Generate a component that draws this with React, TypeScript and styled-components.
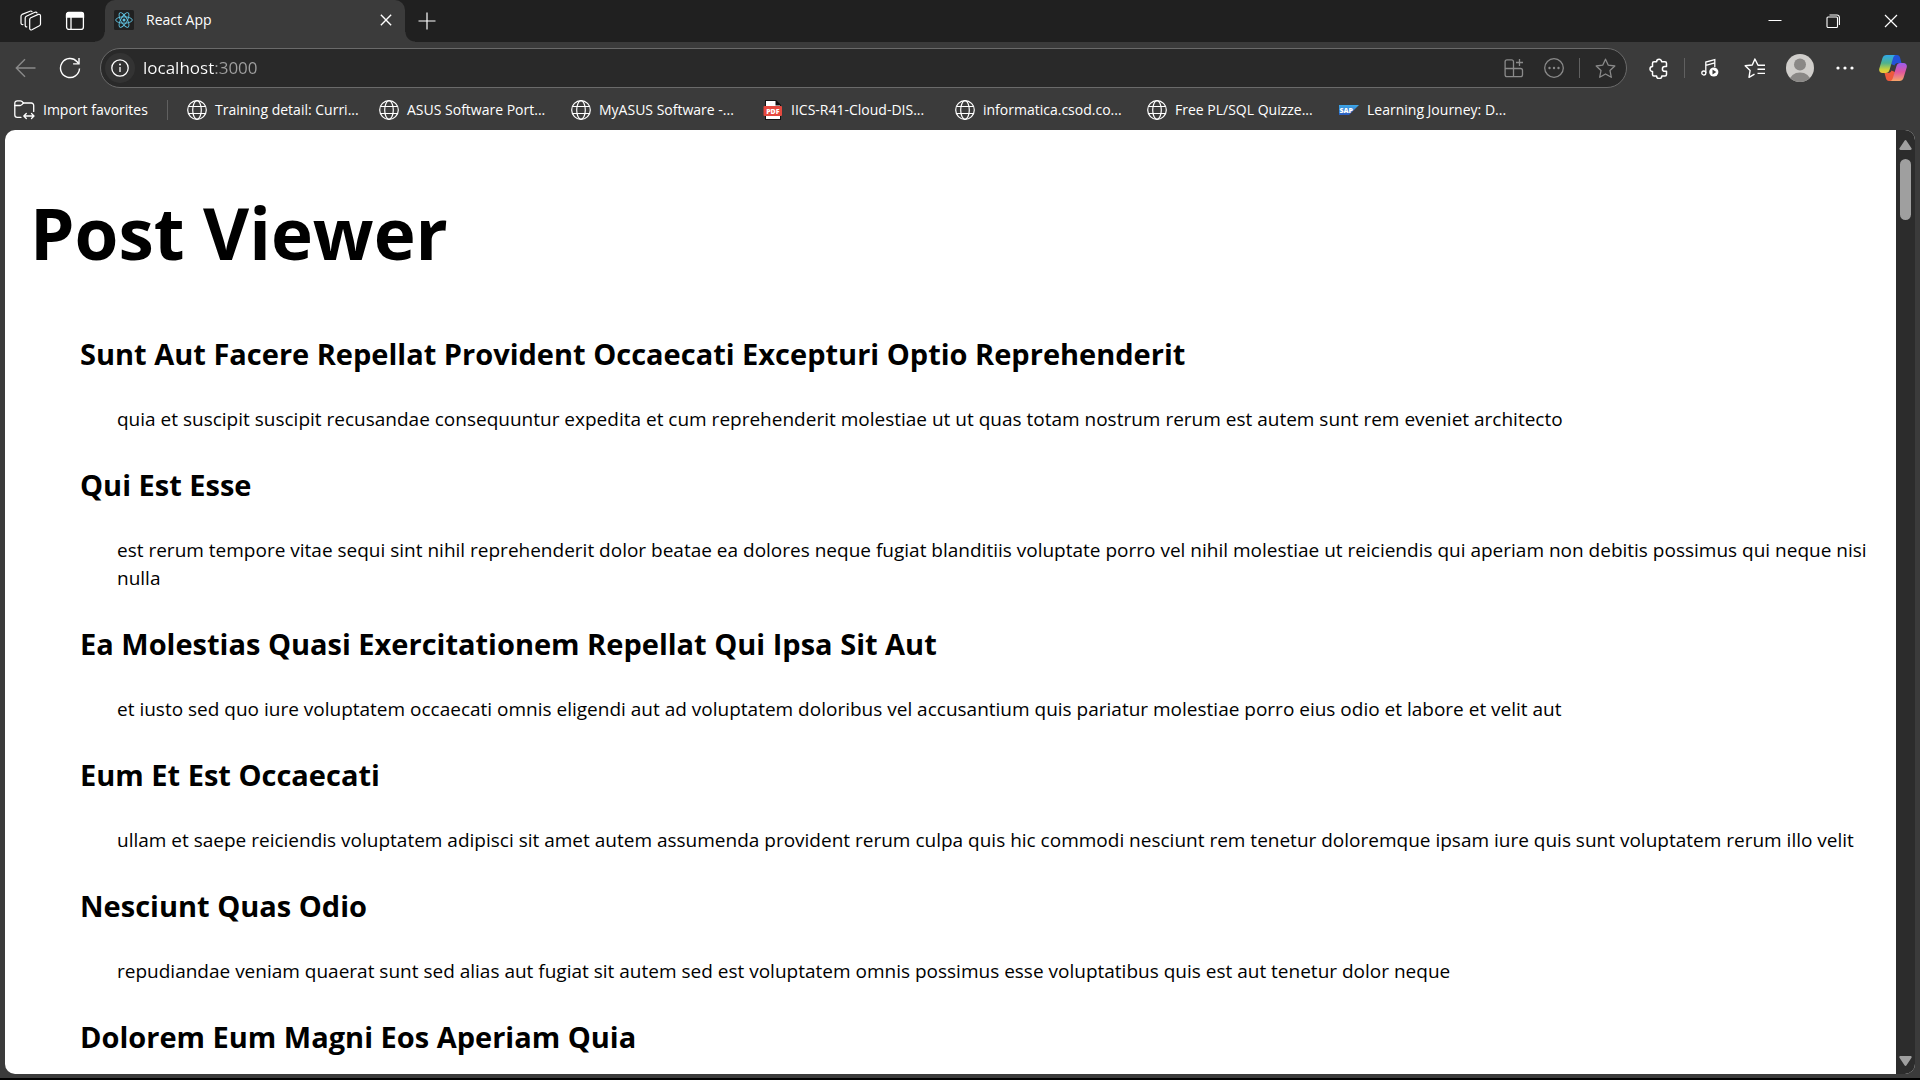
import React from "react";
import styled, { createGlobalStyle } from "styled-components";

const GlobalStyle = createGlobalStyle`
  *, *::before, *::after { box-sizing: border-box; }
  body { margin: 0; background: #000; }
`;

const UI_FONT = `"Open Sans", "Noto Sans", sans-serif`;

const Window = styled.div`
  display: flex;
  flex-direction: column;
  height: 100vh;
  overflow: hidden;
  background: #3b3b3b;
  border-bottom: 2px solid #000;
  font-family: ${UI_FONT};
  color: #fff;
`;

const TabStrip = styled.header`
  display: flex;
  align-items: stretch;
  flex: none;
  height: 42px;
  padding-left: 8px;
  background: #202020;
`;

const IconButton = styled.button<{ $width?: number; $dim?: boolean }>`
  display: flex;
  align-items: center;
  justify-content: center;
  flex: none;
  width: ${(p) => p.$width ?? 40}px;
  height: 100%;
  padding: 0;
  border: 0;
  background: transparent;
  color: ${(p) => (p.$dim ? "#8a8a8a" : "#fff")};

  svg {
    display: block;
  }
`;

const Tab = styled.div`
  position: relative;
  display: flex;
  align-items: center;
  width: 300px;
  margin-left: 8px;
  padding: 0 4px 2px 9px;
  border-radius: 10px 10px 0 0;
  background: #3b3b3b;

  &::before,
  &::after {
    content: "";
    position: absolute;
    bottom: 0;
    width: 10px;
    height: 10px;
  }
  &::before {
    right: 100%;
    background: radial-gradient(circle at 0 0, transparent 9px, #3b3b3b 10px);
  }
  &::after {
    left: 100%;
    background: radial-gradient(circle at 100% 0, transparent 9px, #3b3b3b 10px);
  }
`;

const TabTitle = styled.span`
  flex: 1;
  margin-left: 12px;
  font-size: 14px;
  line-height: 20px;
`;

const Spacer = styled.div`
  flex: 1;
`;

const Toolbar = styled.nav`
  display: flex;
  align-items: center;
  flex: none;
  gap: 5px;
  height: 52px;
  padding: 0 4px 0 5px;
`;

const AddressBar = styled.div`
  display: flex;
  align-items: center;
  flex: 1;
  height: 40px;
  margin: 0 7px 0 5px;
  padding: 0 1px 0 4px;
  border: 1px solid #6a6a6a;
  border-radius: 20px;
  background: #292929;
`;

const SiteInfo = styled(IconButton)`
  width: 30px;
  height: 30px;
  border-radius: 50%;
  background: #333;
`;

const AddressLabel = styled.label`
  display: flex;
  flex: 1;
  margin-left: 8px;
`;

const AddressInput = styled.input`
  flex: 1;
  padding: 0;
  border: 0;
  outline: 0;
  font-family: ${UI_FONT};
  font-size: 17px;
  line-height: 28px;
  color: transparent;
  background: linear-gradient(90deg, #fff 71px, #a0a0a0 71px);
  background-clip: text;
  -webkit-background-clip: text;
`;

const Divider = styled.span<{ $margin?: number }>`
  flex: none;
  width: 1px;
  height: 20px;
  margin: 0 ${(p) => p.$margin ?? 0}px;
  background: #606060;
`;

const Favorites = styled.nav`
  display: flex;
  align-items: center;
  flex: none;
  height: 36px;
  padding: 0 14px 4px;
`;

const FavoriteList = styled.div`
  display: flex;
  margin-left: 19px;
`;

const Favorite = styled.a<{ $width: number }>`
  display: flex;
  align-items: center;
  gap: 8px;
  width: ${(p) => p.$width}px;
  font-size: 14px;
  line-height: 20px;
  white-space: nowrap;
  color: #fff;
  text-decoration: none;

  svg {
    flex: none;
  }
`;

const Viewport = styled.div`
  display: flex;
  flex: 1;
  min-height: 0;
  margin: 0 5px 4px;
  overflow: hidden;
  border-radius: 10px;
  background: #fff;
`;

const Page = styled.main`
  flex: 1;
  min-width: 0;
  overflow: hidden;
  padding: 51px 14px 0 25px;
  color: #000;
`;

const PageTitle = styled.h1`
  margin: 0 0 49px;
  font-size: 71px;
  font-weight: 700;
  line-height: 104px;
`;

const Post = styled.article`
  padding-left: 50px;
`;

const PostTitle = styled.h2`
  margin: 0;
  font-size: 29px;
  font-weight: 700;
  line-height: 40px;
`;

const PostBody = styled.p`
  margin: 0;
  padding: 31px 0 32px 37px;
  font-size: 19px;
  line-height: 28px;
`;

const Scrollbar = styled.aside`
  display: flex;
  flex-direction: column;
  align-items: center;
  flex: none;
  width: 19px;
  padding: 10px 0 8px;
  background: #2c2c2c;
`;

const Thumb = styled.div`
  width: 11px;
  height: 61px;
  margin-top: 9px;
  border-radius: 6px;
  background: #9f9f9f;
`;

const Globe = () => (
  <svg width="20" height="20" viewBox="0 0 20 20" fill="none" stroke="#fff" strokeWidth="1.2">
    <circle cx="10" cy="10" r="9.3" />
    <ellipse cx="10" cy="10" rx="4.3" ry="9.3" />
    <path d="M1.5 6.5h17M1.5 13.5h17" />
  </svg>
);

const ImportIcon = () => (
  <svg width="21" height="20" viewBox="0 0 21 20" fill="none" stroke="#fff" strokeWidth="1.3" strokeLinecap="round" strokeLinejoin="round">
    <path d="M7 17.3H3.2A2.4 2.4 0 0 1 .8 14.9V3.2A2.4 2.4 0 0 1 3.2.8h3.2c.7 0 1.2.3 1.6.7L9.5 3h7.8a2.4 2.4 0 0 1 2.4 2.4v6" />
    <path d="M.8 5.5h5.4c.6 0 1-.2 1.4-.6L9.5 3" />
    <path d="M10 16h9.8M12.3 13.5 9.8 16l2.5 2.5M17.5 13.5 20 16l-2.5 2.5" />
  </svg>
);

const PdfIcon = () => (
  <svg width="20" height="20" viewBox="0 0 20 20">
    <path d="M2 0h11l5 5v15H2z" fill="#111" />
    <path d="M3 1h9.500v4.500H17V19H3z" fill="#fff" />
    <rect x="0.500" y="6" width="18.500" height="10" rx="1" fill="#e5493f" />
    <text x="9.800" y="13.600" textAnchor="middle" fontFamily="Open Sans, sans-serif" fontWeight="800" fontSize="7" fill="#fff">PDF</text>
  </svg>
);

const SapIcon = () => (
  <svg width="20" height="20" viewBox="0 0 20 20">
    <defs>
      <linearGradient id="sap" x1="0" y1="0" x2="0" y2="1">
        <stop offset="0" stopColor="#3fa9e8" />
        <stop offset="1" stopColor="#2a5cc0" />
      </linearGradient>
    </defs>
    <path d="M0 5h20L10 15H0z" fill="url(#sap)" />
    <text x="0.500" y="12.800" fontFamily="Open Sans, sans-serif" fontWeight="800" fontSize="7" fill="#fff">SAP</text>
  </svg>
);

const WorkspacesIcon = () => (
  <svg width="22" height="22" viewBox="0 0 22 22" fill="none" stroke="#fff" strokeWidth="1.2" strokeLinejoin="round" strokeLinecap="round">
    <path d="M9.700 9.500c0-.8.4-1.400 1.100-1.800l7.500-3.300c1-.4 2.200.2 2.200 1.400v8.200c0 .8-.4 1.400-1.100 1.800l-7.500 4c-1 .5-2.200-.1-2.200-1.300z" />
    <path d="M6.800 16.800c-1 .1-1.600-.5-1.600-1.500V8.100c0-.8.4-1.400 1.100-1.800l8.700-4c.8-.3 1.600-.1 2 .6" />
    <path d="M3 14.500c-1.200.2-2-.4-2-1.500V6.200c0-.8.4-1.400 1.100-1.800l7.900-3.200c.8-.3 1.700-.1 2 .5" />
  </svg>
);

const TabPaneIcon = () => (
  <svg width="20" height="20" viewBox="0 0 20 20" fill="none" stroke="#fff" strokeWidth="1.3">
    <rect x="1.600" y="1.600" width="16.800" height="16.800" rx="2.500" />
    <path d="M1.500 6V3.500a2 2 0 0 1 2-2h13a2 2 0 0 1 2 2V6z" fill="#fff" />
    <path d="M6 6v12" />
  </svg>
);

const ReactIcon = () => (
  <svg width="20" height="20" viewBox="0 0 20 20" fill="none" stroke="#61c5e4" strokeWidth="0.9">
    <rect width="20" height="20" rx="1.500" fill="#202020" stroke="none" />
    <ellipse cx="10" cy="10" rx="8.300" ry="3.200" />
    <ellipse cx="10" cy="10" rx="8.300" ry="3.200" transform="rotate(60 10 10)" />
    <ellipse cx="10" cy="10" rx="8.300" ry="3.200" transform="rotate(120 10 10)" />
    <circle cx="10" cy="10" r="1.500" fill="#61c5e4" stroke="none" />
  </svg>
);

const CrossIcon = ({ size, weight }: { size: number; weight: number }) => (
  <svg width={size} height={size} viewBox="0 0 14 14" stroke="#fff" strokeWidth={weight}>
    <path d="M1 1l12 12M13 1L1 13" />
  </svg>
);

const PlusIcon = () => (
  <svg width="18" height="18" viewBox="0 0 18 18" stroke="#fff" strokeWidth="1.2">
    <path d="M9 .5v17M.5 9h17" />
  </svg>
);

const MinimizeIcon = () => (
  <svg width="14" height="14" viewBox="0 0 14 14" stroke="#fff">
    <path d="M.5 6.500h13" />
  </svg>
);

const RestoreIcon = () => (
  <svg width="14" height="14" viewBox="0 0 14 14" fill="none" stroke="#fff" strokeWidth="1.100">
    <rect x="1" y="3" width="10.500" height="10.500" rx="1" />
    <path d="M3.500 1h7.500a2.400 2.400 0 0 1 2.400 2.400V11" />
  </svg>
);

const BackIcon = () => (
  <svg width="21" height="20" viewBox="0 0 21 20" fill="none" stroke="#8a8a8a" strokeWidth="1.400">
    <path d="M20.500 10H1.500M10 1.300 1.300 10l8.700 8.700" />
  </svg>
);

const RefreshIcon = () => (
  <svg width="22" height="22" viewBox="0 0 22 22" fill="none" stroke="#fff" strokeWidth="1.400">
    <path d="M20.500 11.500a9.500 9.500 0 1 1-2.400-6.800l1.500 1.800" />
    <path d="M20 1v5.900h-5.900" />
  </svg>
);

const InfoIcon = () => (
  <svg width="18" height="18" viewBox="0 0 18 18" fill="none" stroke="#fff" strokeWidth="1.300">
    <circle cx="9" cy="9" r="8.200" />
    <path d="M9 8v5" />
    <circle cx="9" cy="5.500" r="1" fill="#fff" stroke="none" />
  </svg>
);

const AppsIcon = () => (
  <svg width="20" height="20" viewBox="0 0 20 20" fill="none" stroke="currentColor" strokeWidth="1.300">
    <path d="M9.500 10.500V3.700A1.900 1.900 0 0 0 7.600 1.800H3a1.900 1.900 0 0 0-1.900 1.900v13A1.900 1.900 0 0 0 3 18.600h13.600a1.900 1.900 0 0 0 1.900-1.900v-4.300a1.900 1.900 0 0 0-1.900-1.900H1.100M9.500 10.500v8.100" />
    <path d="M15.500 1v7M12 4.500h7" />
  </svg>
);

const CircleDotsIcon = () => (
  <svg width="20" height="20" viewBox="0 0 20 20" fill="none" stroke="currentColor" strokeWidth="1.300">
    <circle cx="10" cy="10" r="9.300" />
    <g fill="currentColor" stroke="none">
      <circle cx="5.500" cy="10" r="1.200" />
      <circle cx="10" cy="10" r="1.200" />
      <circle cx="14.500" cy="10" r="1.200" />
    </g>
  </svg>
);

const StarIcon = () => (
  <svg width="21" height="21" viewBox="0 0 21 21" fill="none" stroke="currentColor" strokeWidth="1.300" strokeLinejoin="round">
    <path d="M10.500 1.200l2.800 6 6.500.8-4.800 4.500 1.300 6.800-5.800-3.300-5.800 3.300L6 12.500 1.200 8l6.500-.8z" />
  </svg>
);

const PuzzleIcon = () => (
  <svg width="20" height="21" viewBox="0 0 20 21" fill="none" stroke="#fff" strokeWidth="1.500" strokeLinejoin="round">
    <path d="M3.500 5.200a1.500 1.500 0 0 1 1.500-1.500h2.600a2.500 2.500 0 0 1 5 0h3.400a1.500 1.500 0 0 1 1.500 1.500v3.300h-1.700a2.400 2.400 0 0 0 0 4.800h1.700v3.200a1.500 1.500 0 0 1-1.500 1.500h-3.200a2.600 2.600 0 0 1-5.200 0H5a1.500 1.500 0 0 1-1.500-1.500v-3.100a2.500 2.500 0 0 1 0-5z" />
  </svg>
);

const MusicIcon = () => (
  <svg width="18" height="20" viewBox="0 0 18 20" fill="none" stroke="#fff" strokeWidth="1.300">
    <circle cx="2.800" cy="15" r="2" />
    <path d="M4.800 15V4l9-2.500V9M4.800 7.300l9-2.500" />
    <circle cx="12.800" cy="14" r="4.600" fill="#fff" stroke="none" />
    <path d="M11.500 11.600v4.800l3.800-2.400z" fill="#3b3b3b" stroke="none" />
  </svg>
);

const StarListIcon = () => (
  <svg width="22" height="21" viewBox="0 0 22 21" fill="none" stroke="#fff" strokeWidth="1.400" strokeLinejoin="round">
    <path d="M21 7.200h-7L10.900 1 8.300 7 1.200 7.800l4.900 4.700L5 19.400l5.500-3.200M13.500 11.300H21M13.500 15.400H21" />
  </svg>
);

const AvatarIcon = () => (
  <svg width="28" height="28" viewBox="0 0 28 28">
    <defs>
      <clipPath id="avatar">
        <circle cx="14" cy="14" r="14" />
      </clipPath>
    </defs>
    <g clipPath="url(#avatar)">
      <rect width="28" height="28" fill="#d0cecb" />
      <circle cx="14" cy="10.500" r="6" fill="#8a8886" />
      <ellipse cx="14" cy="27" rx="10.500" ry="8.500" fill="#8a8886" />
    </g>
  </svg>
);

const MoreIcon = () => (
  <svg width="18" height="4" viewBox="0 0 18 4" fill="#fff">
    <circle cx="2" cy="2" r="1.600" />
    <circle cx="9" cy="2" r="1.600" />
    <circle cx="16" cy="2" r="1.600" />
  </svg>
);

const CopilotIcon = () => (
  <svg width="28" height="26" viewBox="0 0 28 26">
    <defs>
      <linearGradient id="cpLeft" x1="0" y1="0" x2="0" y2="1">
        <stop offset="0" stopColor="#2fa8ea" />
        <stop offset="0.450" stopColor="#4fb28e" />
        <stop offset="0.800" stopColor="#c9d23c" />
        <stop offset="1" stopColor="#f2c53a" />
      </linearGradient>
      <linearGradient id="cpRight" x1="0" y1="0" x2="0" y2="1">
        <stop offset="0" stopColor="#9a5cf0" />
        <stop offset="0.500" stopColor="#e0569e" />
        <stop offset="1" stopColor="#f7a568" />
      </linearGradient>
    </defs>
    <path d="M13 0h5c1.700 0 2.500 1 3 2.500L22.500 8H19c-2 0-3 1-3.500 2.500L12 9z" fill="#2352d8" />
    <path d="M15 26h-5c-1.700 0-2.500-1-3-2.500L5.500 18H9c2 0 3-1 3.500-2.500L16 17z" fill="#ee5a3c" />
    <path d="M7.500 0H17c-1.700 0-2.400 1.500-2.900 3l-3.600 12c-.6 2-1.800 3-3.800 3H3.500C.8 18-.3 16 .3 13.500L3.500 3C4.200 1 5.500 0 7.500 0z" fill="url(#cpLeft)" />
    <path d="M20.500 26H11c1.700 0 2.400-1.500 2.900-3l3.600-12c.6-2 1.800-3 3.800-3h3.200c2.700 0 3.800 2 3.200 4.500L24.500 23c-.7 2-2 3-4 3z" fill="url(#cpRight)" />
  </svg>
);

const ScrollArrow = ({ down = false }: { down?: boolean }) => (
  <svg width="13" height="10" viewBox="0 0 13 10" fill="#9f9f9f">
    <path d={down ? "M1.500 0h10c1 0 1.500 1 1 1.800L7.500 9.300c-.5.900-1.500.9-2 0L.5 1.800C0 1 .5 0 1.500 0z" : "M1.500 10h10c1 0 1.500-1 1-1.800L7.500.7c-.5-.9-1.500-.9-2 0L.5 8.200c-.5.800 0 1.800 1 1.800z"} />
  </svg>
);

const favorites = [
  { label: "Training detail: Curri...", icon: <Globe /> },
  { label: "ASUS Software Port...", icon: <Globe /> },
  { label: "MyASUS Software -...", icon: <Globe /> },
  { label: "IICS-R41-Cloud-DIS...", icon: <PdfIcon /> },
  { label: "informatica.csod.co...", icon: <Globe /> },
  { label: "Free PL/SQL Quizze...", icon: <Globe /> },
  { label: "Learning Journey: D...", icon: <SapIcon /> },
];

const posts = [
  {
    title: "Sunt Aut Facere Repellat Provident Occaecati Excepturi Optio Reprehenderit",
    body: "quia et suscipit suscipit recusandae consequuntur expedita et cum reprehenderit molestiae ut ut quas totam nostrum rerum est autem sunt rem eveniet architecto",
  },
  {
    title: "Qui Est Esse",
    body: "est rerum tempore vitae sequi sint nihil reprehenderit dolor beatae ea dolores neque fugiat blanditiis voluptate porro vel nihil molestiae ut reiciendis qui aperiam non debitis possimus qui neque nisi nulla",
  },
  {
    title: "Ea Molestias Quasi Exercitationem Repellat Qui Ipsa Sit Aut",
    body: "et iusto sed quo iure voluptatem occaecati omnis eligendi aut ad voluptatem doloribus vel accusantium quis pariatur molestiae porro eius odio et labore et velit aut",
  },
  {
    title: "Eum Et Est Occaecati",
    body: "ullam et saepe reiciendis voluptatem adipisci sit amet autem assumenda provident rerum culpa quis hic commodi nesciunt rem tenetur doloremque ipsam iure quis sunt voluptatem rerum illo velit",
  },
  {
    title: "Nesciunt Quas Odio",
    body: "repudiandae veniam quaerat sunt sed alias aut fugiat sit autem sed est voluptatem omnis possimus esse voluptatibus quis est aut tenetur dolor neque",
  },
  { title: "Dolorem Eum Magni Eos Aperiam Quia", body: "" },
];

export default function App() {
  return (
    <>
      <GlobalStyle />
      <Window>
        <TabStrip>
          <IconButton $width={45} aria-label="Workspaces"><WorkspacesIcon /></IconButton>
          <IconButton $width={44} aria-label="Tab actions"><TabPaneIcon /></IconButton>
          <Tab>
            <ReactIcon />
            <TabTitle>React App</TabTitle>
            <IconButton $width={30} aria-label="Close tab"><CrossIcon size={12} weight={1.6} /></IconButton>
          </Tab>
          <IconButton $width={44} aria-label="New tab"><PlusIcon /></IconButton>
          <Spacer />
          <IconButton $width={58} aria-label="Minimize"><MinimizeIcon /></IconButton>
          <IconButton $width={58} aria-label="Restore"><RestoreIcon /></IconButton>
          <IconButton $width={58} aria-label="Close"><CrossIcon size={14} weight={1.2} /></IconButton>
        </TabStrip>

        <Toolbar aria-label="Navigation">
          <IconButton aria-label="Back"><BackIcon /></IconButton>
          <IconButton aria-label="Refresh"><RefreshIcon /></IconButton>
          <AddressBar>
            <SiteInfo aria-label="Site information"><InfoIcon /></SiteInfo>
            <AddressLabel>
              <AddressInput aria-label="Address" defaultValue="localhost:3000" spellCheck={false} />
            </AddressLabel>
            <IconButton $dim aria-label="Install app"><AppsIcon /></IconButton>
            <IconButton $dim aria-label="Page actions"><CircleDotsIcon /></IconButton>
            <Divider $margin={5} />
            <IconButton $dim aria-label="Add to favorites"><StarIcon /></IconButton>
          </AddressBar>
          <IconButton aria-label="Extensions"><PuzzleIcon /></IconButton>
          <Divider />
          <IconButton aria-label="Media"><MusicIcon /></IconButton>
          <IconButton aria-label="Favorites"><StarListIcon /></IconButton>
          <IconButton aria-label="Profile"><AvatarIcon /></IconButton>
          <IconButton aria-label="More"><MoreIcon /></IconButton>
          <IconButton $width={46} aria-label="Copilot"><CopilotIcon /></IconButton>
        </Toolbar>

        <Favorites aria-label="Favorites bar">
          <Favorite href="#import" $width={153}><ImportIcon />Import favorites</Favorite>
          <Divider />
          <FavoriteList>
            {favorites.map((f) => (
              <Favorite key={f.label} href="#favorite" $width={192}>{f.icon}{f.label}</Favorite>
            ))}
          </FavoriteList>
        </Favorites>

        <Viewport>
          <Page>
            <PageTitle>Post Viewer</PageTitle>
            {posts.map((p) => (
              <Post key={p.title}>
                <PostTitle>{p.title}</PostTitle>
                {p.body && <PostBody>{p.body}</PostBody>}
              </Post>
            ))}
          </Page>
          <Scrollbar>
            <ScrollArrow />
            <Thumb />
            <Spacer />
            <ScrollArrow down />
          </Scrollbar>
        </Viewport>
      </Window>
    </>
  );
}
